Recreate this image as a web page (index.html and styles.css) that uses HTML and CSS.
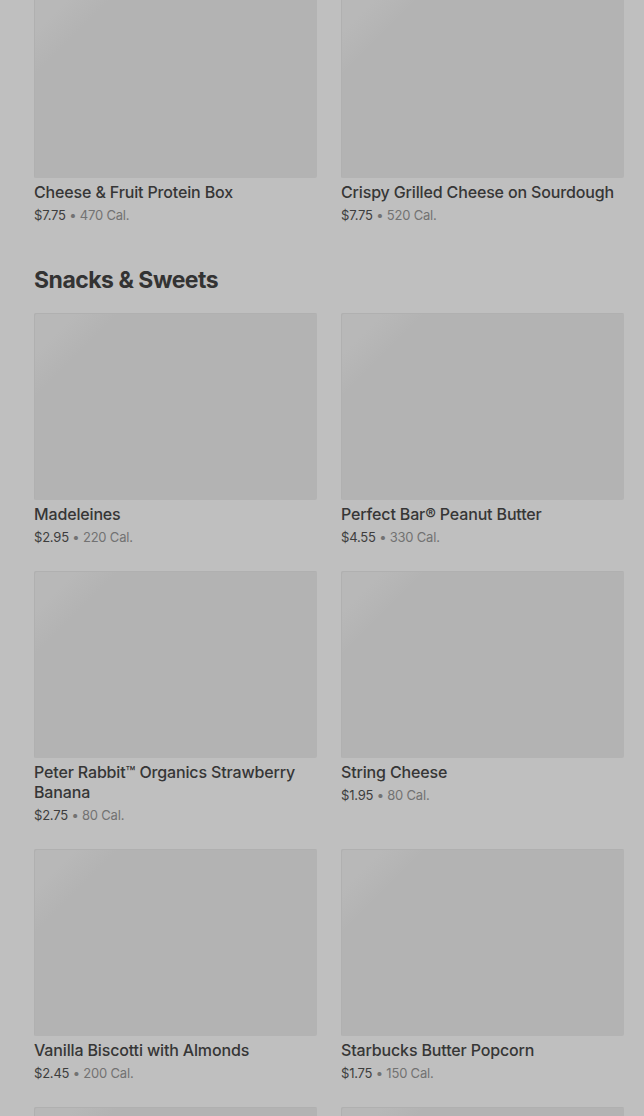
FILE: index.html
```html
<!DOCTYPE html>
<html lang="en">
<head>
<meta charset="utf-8">
<link rel="stylesheet" href="styles.css">
</head>
<body>
<main class="menu">
  <section class="section">
    <div class="grid">
      <div class="card">
        <div class="thumb"></div>
        <div class="title">Cheese &amp; Fruit Protein Box</div>
        <div class="meta"><span class="price">$7.75</span><span class="cal"> • 470 Cal.</span></div>
      </div>
      <div class="card">
        <div class="thumb"></div>
        <div class="title">Crispy Grilled Cheese on Sourdough</div>
        <div class="meta"><span class="price">$7.75</span><span class="cal"> • 520 Cal.</span></div>
      </div>
    </div>
  </section>
  <section class="section">
    <h2 class="heading">Snacks &amp; Sweets</h2>
    <div class="grid">
      <div class="card">
        <div class="thumb"></div>
        <div class="title">Madeleines</div>
        <div class="meta"><span class="price">$2.95</span><span class="cal"> • 220 Cal.</span></div>
      </div>
      <div class="card">
        <div class="thumb"></div>
        <div class="title">Perfect Bar® Peanut Butter</div>
        <div class="meta"><span class="price">$4.55</span><span class="cal"> • 330 Cal.</span></div>
      </div>
      <div class="card">
        <div class="thumb"></div>
        <div class="title">Peter Rabbit™ Organics Strawberry Banana</div>
        <div class="meta"><span class="price">$2.75</span><span class="cal"> • 80 Cal.</span></div>
      </div>
      <div class="card">
        <div class="thumb"></div>
        <div class="title">String Cheese</div>
        <div class="meta"><span class="price">$1.95</span><span class="cal"> • 80 Cal.</span></div>
      </div>
      <div class="card">
        <div class="thumb"></div>
        <div class="title">Vanilla Biscotti with Almonds</div>
        <div class="meta"><span class="price">$2.45</span><span class="cal"> • 200 Cal.</span></div>
      </div>
      <div class="card">
        <div class="thumb"></div>
        <div class="title">Starbucks Butter Popcorn</div>
        <div class="meta"><span class="price">$1.75</span><span class="cal"> • 150 Cal.</span></div>
      </div>
      <div class="card">
        <div class="thumb"></div>
      </div>
      <div class="card">
        <div class="thumb"></div>
      </div>
    </div>
  </section>
</main>
</body>
</html>
```

FILE: styles.css
```css
html, body {
  margin: 0;
  padding: 0;
  background: #bfbfbf;
  overflow: hidden;
}
body {
  font-family: Inter, "Noto Sans", sans-serif;
  color: #333;
}
.menu {
  margin-top: -9px;
  padding: 0 20px 0 34px;
}
.section + .section {
  margin-top: 39px;
}
.heading {
  margin: 0 0 17px;
  font-size: 23px;
  line-height: 32px;
  font-weight: 700;
  color: #333;
  letter-spacing: -0.5px;
}
.grid {
  display: grid;
  grid-template-columns: 283px 283px;
  column-gap: 24px;
  row-gap: 24px;
}
.card {
  display: flex;
  flex-direction: column;
}
.thumb {
  height: 187px;
  background: linear-gradient(135deg, #b8b8b8 0, #b8b8b8 30px, #b3b3b3 60px, #b3b3b3 100%);
  border-radius: 2px;
  box-shadow: inset 1px 1px 0 #b0b0b0;
}
.title {
  margin-top: 4px;
  font-size: 16px;
  line-height: 20px;
  font-weight: 500;
  color: #363636;
  letter-spacing: -0.15px;
}
.meta {
  margin-top: 3px;
  font-size: 13px;
  line-height: 20px;
  letter-spacing: -0.2px;
}
.price {
  color: #3d3d3d;
}
.cal {
  color: #727272;
}
```
